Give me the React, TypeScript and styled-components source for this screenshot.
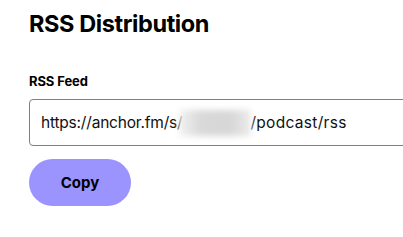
import React from "react";
import styled, { createGlobalStyle } from "styled-components";

const Global = createGlobalStyle`
  html, body { margin: 0; padding: 0; background: #fff; }
  body { font-family: Inter, "Noto Sans", sans-serif; color: #000; }
`;

const Page = styled.div`
  display: flex;
  flex-direction: column;
  padding: 9px 0 0 29px;
  width: 403px;
  box-sizing: border-box;
  overflow: hidden;
`;

const Title = styled.h1`
  margin: 0;
  font-size: 23.5px;
  font-weight: 700;
  letter-spacing: -0.4px;
  line-height: 30px;
`;

const Label = styled.label`
  margin-top: 34px;
  font-size: 13px;
  font-weight: 700;
  line-height: 16px;
  letter-spacing: -0.1px;
`;

const Field = styled.div`
  margin-top: 10px;
  width: 420px;
  height: 47px;
  box-sizing: border-box;
  border: 1px solid #7f7f7f;
  border-radius: 4px;
  display: flex;
  align-items: center;
  padding-left: 11px;
  font-size: 15.5px;
  letter-spacing: -0.2px;
  color: #111;
  white-space: nowrap;
`;

const Blurred = styled.span`
  display: inline-block;
  width: 72px;
  height: 26px;
  margin: 0 -1px 0 -3px;
  background: linear-gradient(90deg, #f2f2f2, #d9d9d9 30%, #d6d6d6 70%, #ececec);
  filter: blur(3px);
`;

const Tail = styled.span`
  letter-spacing: 0.3px;
`;

const Button = styled.button`
  margin-top: 13px;
  width: 102px;
  height: 47px;
  border: none;
  border-radius: 24px;
  background: #9b94ff;
  font-family: Inter, "Noto Sans", sans-serif;
  font-size: 15px;
  font-weight: 700;
  color: #000;
`;

export default function App() {
  return (
    <>
      <Global />
      <Page>
        <Title>RSS Distribution</Title>
        <Label>RSS Feed</Label>
        <Field>
          https://anchor.fm/s/<Blurred />
          <Tail>/podcast/rss</Tail>
        </Field>
        <Button>Copy</Button>
      </Page>
    </>
  );
}
